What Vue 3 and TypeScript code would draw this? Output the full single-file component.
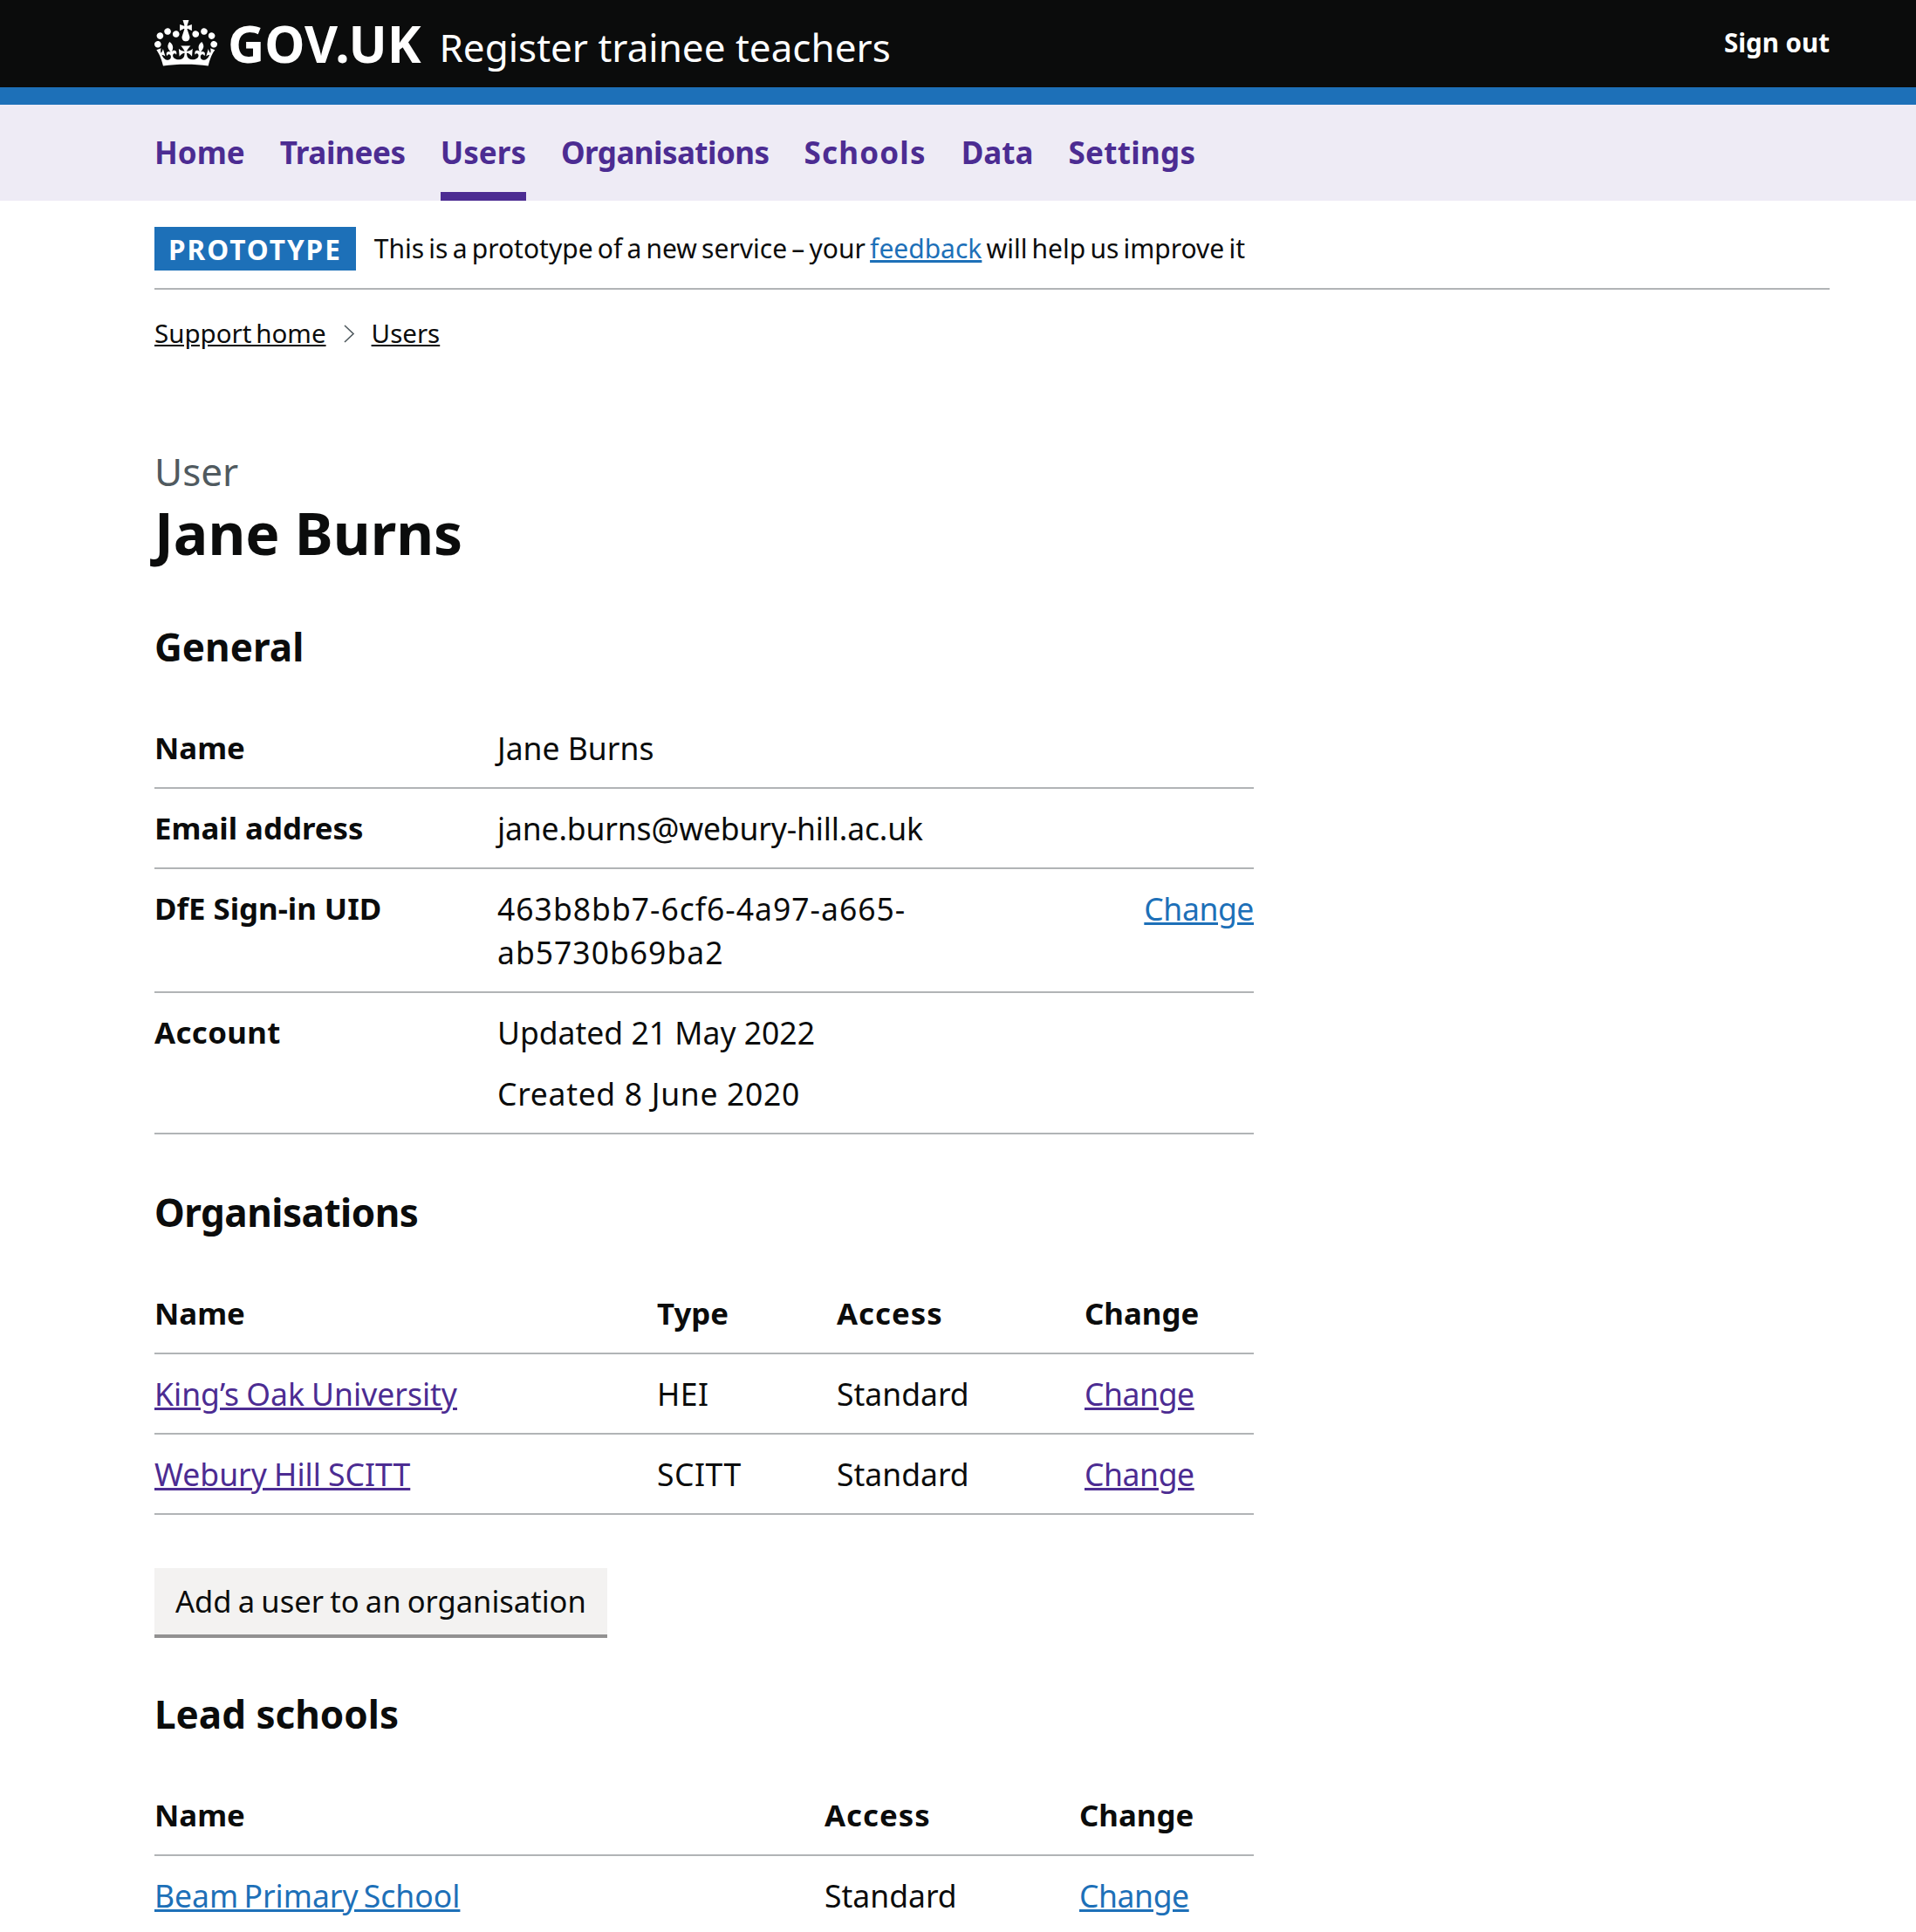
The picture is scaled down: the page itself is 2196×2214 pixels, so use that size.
<template>
  <div class="page">
    <header class="header">
      <div class="header-inner">
        <a class="logo" href="#">
          <svg class="crown" viewBox="0 0 132 97" aria-hidden="true">
            <path fill="currentColor" fill-rule="evenodd" d="M25 30.2c3.5 1.5 7.7-.2 9.1-3.7 1.5-3.6-.2-7.8-3.9-9.2-3.6-1.4-7.6.3-9.1 3.9-1.4 3.5.3 7.5 3.9 9zM9 39.5c3.6 1.5 7.8-.2 9.2-3.7 1.5-3.6-.2-7.8-3.9-9.1-3.6-1.5-7.6.2-9.1 3.8-1.4 3.5.3 7.5 3.8 9zM4.4 57.2c3.5 1.5 7.7-.2 9.1-3.8 1.5-3.6-.2-7.7-3.9-9.1-3.5-1.5-7.6.3-9.1 3.8-1.4 3.5.3 7.6 3.9 9.1zm38.3-21.4c3.5 1.5 7.7-.2 9.1-3.8 1.5-3.6-.2-7.7-3.9-9.1-3.6-1.5-7.6.3-9.1 3.8-1.3 3.6.4 7.7 3.9 9.1zm64.4-5.6c-3.6 1.5-7.8-.2-9.1-3.7-1.5-3.6.2-7.8 3.8-9.2 3.6-1.4 7.7.3 9.2 3.9 1.3 3.5-.4 7.5-3.9 9zm15.9 9.3c-3.6 1.5-7.7-.2-9.1-3.7-1.5-3.6.2-7.8 3.7-9.1 3.6-1.5 7.7.2 9.2 3.8 1.5 3.5-.3 7.5-3.8 9zm4.7 17.7c-3.6 1.5-7.8-.2-9.2-3.8-1.5-3.6.2-7.7 3.9-9.1 3.6-1.5 7.7.3 9.2 3.8 1.3 3.5-.4 7.6-3.9 9.1zM89.3 35.8c-3.6 1.5-7.8-.2-9.2-3.8-1.4-3.6.2-7.7 3.9-9.1 3.6-1.5 7.7.3 9.2 3.8 1.4 3.6-.3 7.7-3.9 9.1zM69.7 17.7l8.9 4.7V9.3l-8.9 2.8c-.2-.3-.5-.6-.9-.9L72.4 0H59.6l3.5 11.2c-.3.3-.6.5-.9.9l-8.8-2.8v13.1l8.8-4.7c.3.3.6.7.9.9l-5 15.4v.1c-.2.8-.4 1.6-.4 2.4 0 4.1 3.1 7.5 7 8.1h.2c.3 0 .7.1 1 .1.4 0 .7 0 1-.1h.2c4-.6 7.1-4.1 7.1-8.1 0-.8-.1-1.7-.4-2.4V34l-5.1-15.4c.4-.2.7-.6 1-.9zM66 92.8c16.9 0 32.8 1.1 47.1 3.2 4-16.9 8.9-26.7 14-33.5l-9.6-3.4c1 4.9 1.1 7.2 0 10.2-1.5-1.4-3-4.3-4.2-8.7L108.6 76c2.8-2 5-3.2 7.5-3.3-4.4 9.4-10 11.9-13.6 11.2-4.3-.8-6.3-4.6-5.6-7.9 1-4.7 5.7-5.9 8-.5 4.3-8.7-3-11.4-7.6-8.8 7.1-7.2 7.9-13.5 2.1-21.1-8 6.1-8.1 12.3-4.5 20.8-4.7-5.4-12.1-2.5-9.5 6.2 3.4-5.2 7.9-2 7.2 3.1-.6 4.3-6.4 7.8-13.5 7.2-10.3-.9-10.9-8-11.2-13.8 2.5-.5 7.1 1.8 11 7.3L80.2 60c-4.1 4.4-8 5.3-12.3 5.4 1.4-4.4 8-11.6 8-11.6H55.5s6.4 7.2 7.9 11.6c-4.2-.1-8-1-12.3-5.4l1.4 16.4c3.9-5.5 8.5-7.7 10.9-7.3-.3 5.8-.9 12.8-11.1 13.8-7.2.6-12.9-2.9-13.5-7.2-.7-5 3.8-8.3 7.1-3.1 2.7-8.7-4.6-11.6-9.4-6.2 3.7-8.5 3.6-14.7-4.6-20.8-5.8 7.6-5 13.9 2.2 21.1-4.7-2.6-11.9.1-7.7 8.8 2.3-5.5 7.1-4.2 8.1.5.7 3.3-1.3 7.1-5.7 7.9-3.5.7-9-1.8-13.5-11.2 2.5.1 4.7 1.3 7.5 3.3l-4.7-15.4c-1.2 4.4-2.7 7.2-4.3 8.7-1.1-3-.9-5.3 0-10.2l-9.5 3.4c5 6.9 9.9 16.7 14 33.5 14.8-2.1 30.8-3.2 47.7-3.2z"/>
          </svg>
          <span class="logo-text">GOV.UK</span>
        </a>
        <a class="service-name" href="#">Register trainee teachers</a>
        <a class="sign-out" href="#">Sign out</a>
      </div>
    </header>

    <nav class="nav">
      <ul class="nav-list">
        <li v-for="item in navItems" :key="item" class="nav-item" :class="{ current: item === 'Users' }">
          <a href="#">{{ item }}</a>
        </li>
      </ul>
    </nav>

    <div class="container">
      <div class="phase-banner">
        <strong class="tag">PROTOTYPE</strong>
        <span class="phase-text">This is a prototype of a new service – your <a class="link" href="#">feedback</a> will help us improve it</span>
      </div>

      <div class="breadcrumbs">
        <a href="#">Support home</a>
        <svg class="chevron" viewBox="0 0 14 21" aria-hidden="true"><path d="M2 1l10 9.5L2 20" fill="none" stroke="#505a5f" stroke-width="1.6"/></svg>
        <a href="#">Users</a>
      </div>

      <main class="main">
        <span class="caption">User</span>
        <h1 class="title">Jane Burns</h1>

        <h2 class="heading general">General</h2>
        <dl class="summary">
          <div class="summary-row">
            <dt>Name</dt>
            <dd>Jane Burns</dd>
          </div>
          <div class="summary-row">
            <dt>Email address</dt>
            <dd class="email">jane.burns@webury-hill.ac.uk</dd>
          </div>
          <div class="summary-row">
            <dt>DfE Sign-in UID</dt>
            <dd class="uid">463b8bb7-6cf6-4a97-a665-<br />ab5730b69ba2</dd>
            <dd class="action"><a class="link change" href="#">Change</a></dd>
          </div>
          <div class="summary-row">
            <dt class="account">Account</dt>
            <dd>
              <p>Updated 21 May 2022</p>
              <p class="created">Created 8 June 2020</p>
            </dd>
          </div>
        </dl>

        <h2 class="heading organisations">Organisations</h2>
        <table class="table orgs">
          <thead>
            <tr><th>Name</th><th>Type</th><th class="access">Access</th><th>Change</th></tr>
          </thead>
          <tbody>
            <tr v-for="org in organisations" :key="org.name">
              <td><a class="link visited org-name" href="#">{{ org.name }}</a></td>
              <td class="org-type">{{ org.type }}</td>
              <td>Standard</td>
              <td><a class="link visited change" href="#">Change</a></td>
            </tr>
          </tbody>
        </table>

        <a class="button" href="#">Add a user to an organisation</a>

        <h2 class="heading lead">Lead schools</h2>
        <table class="table leads">
          <thead>
            <tr><th>Name</th><th class="access">Access</th><th>Change</th></tr>
          </thead>
          <tbody>
            <tr>
              <td><a class="link school-name" href="#">Beam Primary School</a></td>
              <td>Standard</td>
              <td><a class="link change" href="#">Change</a></td>
            </tr>
          </tbody>
        </table>
      </main>
    </div>
  </div>
</template>

<script setup lang="ts">
const navItems: string[] = ['Home', 'Trainees', 'Users', 'Organisations', 'Schools', 'Data', 'Settings']

const organisations: { name: string; type: string }[] = [
  { name: 'King’s Oak University', type: 'HEI' },
  { name: 'Webury Hill SCITT', type: 'SCITT' },
]
</script>

<style>
html,
body {
  margin: 0;
  background: #fff;
}
</style>

<style scoped>
.page {
  height: 2214px;
  overflow: hidden;
  font-family: 'Noto Sans', Arial, sans-serif;
  font-size: 35.5px;
  line-height: 50px;
  color: #0b0c0c;
}
.header {
  height: 100px;
  background: #0b0c0c;
  border-bottom: 20px solid #1d70b8;
  color: #fff;
}
.header-inner {
  display: flex;
  align-items: center;
  height: 100px;
  padding: 0 99px 0 177px;
}
.logo {
  display: flex;
  align-items: center;
  color: #fff;
  text-decoration: none;
}
.crown {
  width: 72px;
  height: 53px;
  margin-right: 12px;
  margin-bottom: 2px;
}
.logo-text {
  font-weight: 700;
  font-size: 58.5px;
  margin-bottom: 3px;
}
.service-name {
  margin-left: 21px;
  margin-top: 8px;
  font-size: 44px;
  color: #fff;
  text-decoration: none;
}
.sign-out {
  margin-left: auto;
  margin-bottom: 2px;
  font-size: 29.5px;
  font-weight: 700;
  color: #fff;
  text-decoration: none;
}
.nav {
  height: 110px;
  background: #eeebf5;
}
.nav-list {
  display: flex;
  gap: 40px;
  margin: 0;
  padding: 0 0 0 177px;
  list-style: none;
}
.nav-item {
  height: 110px;
  box-sizing: border-box;
  padding-top: 29px;
}
.nav-item a {
  font-size: 35px;
  font-weight: 700;
  color: #4c2c92;
  text-decoration: none;
}
.nav-item:nth-child(2) a {
  letter-spacing: -0.35px;
}
.nav-item:nth-child(4) a {
  letter-spacing: -0.55px;
}
.nav-item:nth-child(5) a {
  letter-spacing: 1.2px;
}
.nav-item:nth-child(7) a {
  letter-spacing: 0.3px;
}
.nav-item.current {
  border-bottom: 10px solid #4c2c92;
}
.container {
  margin: 0 99px 0 177px;
}
.phase-banner {
  display: flex;
  align-items: flex-start;
  height: 102px;
  box-sizing: border-box;
  padding-top: 30px;
  border-bottom: 2px solid #b1b4b6;
}
.tag {
  padding: 0 16px;
  height: 50px;
  line-height: 52px;
  background: #1d70b8;
  color: #fff;
  font-size: 31.5px;
  letter-spacing: 2px;
}
.phase-text {
  margin-left: 21px;
  font-size: 30px;
  word-spacing: -2.6px;
}
.link {
  color: #1d70b8;
  text-decoration: underline;
}
.link.visited {
  color: #4c2c92;
}
.link.change {
  letter-spacing: -0.4px;
}
.breadcrumbs {
  display: flex;
  align-items: center;
  margin-top: 25px;
  font-size: 29.5px;
  word-spacing: -2.8px;
  line-height: 50px;
}
.breadcrumbs a {
  color: #0b0c0c;
}
.chevron {
  width: 14px;
  height: 21px;
  margin: 0 19px;
}
.main {
  padding-top: 106px;
}
.caption {
  display: block;
  font-size: 44px;
  line-height: 55px;
  color: #505a5f;
}
.title {
  margin: 0;
  font-size: 66px;
  line-height: 84px;
  font-weight: 700;
}
.heading {
  margin: 40px 0 41px;
  font-size: 44px;
  line-height: 60px;
  font-weight: 700;
}
.heading.general {
  margin-top: 59px;
}
.heading.organisations {
  letter-spacing: -0.5px;
}
.summary {
  width: 1260px;
  margin: 0 0 59px;
}
.summary-row {
  display: flex;
  border-bottom: 2px solid #b1b4b6;
  padding: 20px 0 20px;
}
.summary-row dt {
  width: 393px;
  font-size: 34.8px;
  font-weight: 700;
}
.summary-row dt.account {
  letter-spacing: 0.4px;
}
.summary-row dd {
  margin: 0;
}
.summary-row dd p {
  margin: 0 0 20px;
}
.summary-row dd p:last-child {
  margin-bottom: 0;
}
.summary-row dd.email {
  letter-spacing: -0.15px;
}
.summary-row dd.uid {
  flex: 1;
  letter-spacing: 1px;
}
.summary-row dd.action {
  text-align: right;
}
.summary-row dd p.created {
  letter-spacing: 0.7px;
}
.table {
  width: 1260px;
  border-collapse: collapse;
  table-layout: fixed;
}
.table th,
.table td {
  padding: 20px 0;
  text-align: left;
  border-bottom: 2px solid #b1b4b6;
}
.table th {
  font-size: 34.8px;
  font-weight: 700;
}
.table th.access {
  letter-spacing: 1px;
}
.orgs th:nth-child(1) { width: 576px; }
.orgs th:nth-child(2) { width: 206px; }
.orgs th:nth-child(3) { width: 284px; }
.leads th:nth-child(1) { width: 768px; }
.leads th:nth-child(2) { width: 292px; }
.org-name {
  word-spacing: -1px;
}
.org-type {
  letter-spacing: 0.5px;
}
.school-name {
  word-spacing: -3px;
}
.button {
  display: inline-block;
  margin-top: 61px;
  padding: 13px 24px;
  background: #f3f2f1;
  box-shadow: 0 4px 0 #929191;
  color: #0b0c0c;
  font-size: 34.5px;
  text-decoration: none;
  word-spacing: -1.7px;
}
.heading.lead {
  margin-top: 61px;
}
</style>
